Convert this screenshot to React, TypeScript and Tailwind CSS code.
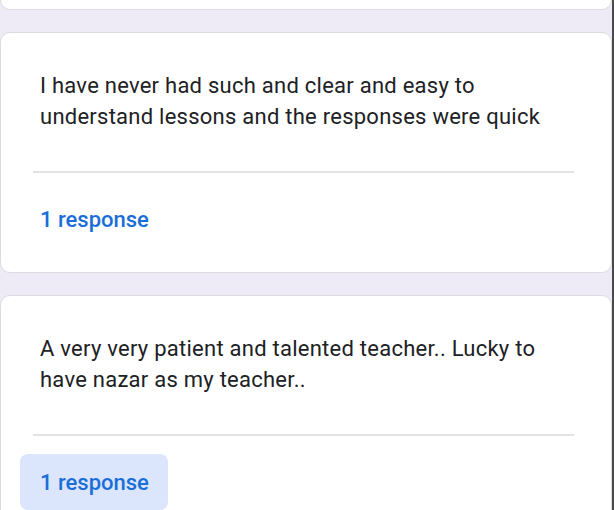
const answers = [
  {
    text: "I have never had such and clear and easy to understand lessons and the responses were quick",
    active: false,
  },
  {
    text: "A very very patient and talented teacher.. Lucky to have nazar as my teacher..",
    active: true,
  },
];

function AnswerCard({ text, active }: { text: string; active: boolean }) {
  return (
    <div className="rounded-[10px] border border-[#dadce0] bg-white pt-[37px] pb-[25px]">
      <p className="pl-[39px] pr-[44px] text-[22px] leading-[31px] tracking-[0.25px] text-[#202124]">
        {text}
      </p>
      <div className="mt-[39px] ml-[32px] mr-[37px] h-[2px] bg-[#e3e3e3]" />
      <div className="mt-[18px] ml-[19px] flex">
        <div
          className={
            active
              ? "flex h-[56px] items-center rounded-[8px] bg-[#dbe6fc] pl-[20px] pr-[19px] text-[22px] font-medium text-[#1a6ed8]"
              : "flex h-[56px] items-center rounded-[8px] pl-[20px] pr-[19px] text-[22px] font-medium text-[#1a6ed8]"
          }
        >
          1 response
        </div>
      </div>
    </div>
  );
}

export default function App() {
  return (
    <div
      className="flex h-[510px] w-[614px] overflow-hidden bg-[#eeebf7]"
      style={{ fontFamily: "Roboto, 'Noto Sans', sans-serif" }}
    >
      <div className="flex w-[612px] flex-col gap-[22px] -mt-[30px]">
        <div className="h-[40px] shrink-0 rounded-[10px] border border-[#dadce0] bg-white" />
        {answers.map((a, i) => (
          <AnswerCard key={i} text={a.text} active={a.active} />
        ))}
      </div>
      <div className="w-[2px] bg-[#4a4a4a]" />
    </div>
  );
}
